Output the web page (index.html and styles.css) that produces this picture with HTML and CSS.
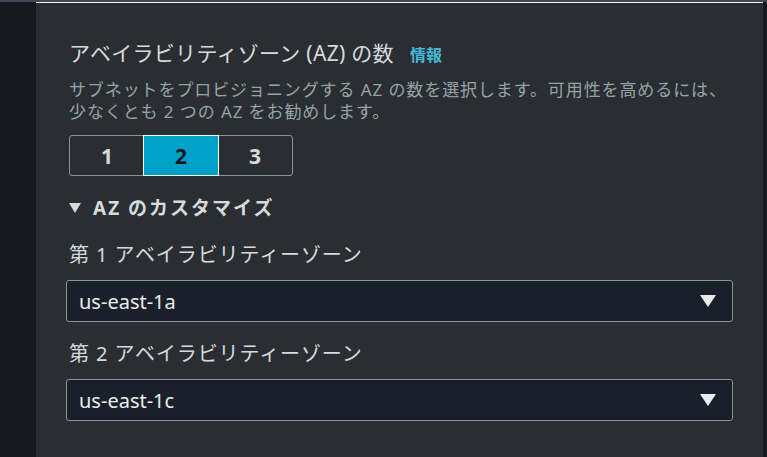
FILE: index.html
```html
<!DOCTYPE html>
<html lang="ja">
<head>
<meta charset="utf-8">
<link rel="stylesheet" href="styles.css">
</head>
<body>
<div class="topbar"></div>
<div class="main">
  <div class="side"></div>
  <div class="panel">
    <div class="heading">
      <span class="title">アベイラビリティゾーン (AZ) の数</span>
      <span class="info">情報</span>
    </div>
    <p class="desc">サブネットをプロビジョニングする AZ の数を選択します。可用性を高めるには、<br>少なくとも 2 つの AZ をお勧めします。</p>
    <div class="segments">
      <div class="seg">1</div>
      <div class="seg selected">2</div>
      <div class="seg">3</div>
    </div>
    <div class="expander">
      <svg class="caret" width="12" height="10" viewBox="0 0 12 10"><path d="M0 0 H12 L6 10 Z" fill="#d5dbdb"/></svg>
      <span>AZ のカスタマイズ</span>
    </div>
    <div class="field">
      <div class="label">第 1 アベイラビリティーゾーン</div>
      <div class="select">
        <span>us-east-1a</span>
        <svg class="arrow" width="16" height="12" viewBox="0 0 16 12"><path d="M0 0 H16 L8 12 Z" fill="#eaeded"/></svg>
      </div>
    </div>
    <div class="field">
      <div class="label">第 2 アベイラビリティーゾーン</div>
      <div class="select">
        <span>us-east-1c</span>
        <svg class="arrow" width="16" height="12" viewBox="0 0 16 12"><path d="M0 0 H16 L8 12 Z" fill="#eaeded"/></svg>
      </div>
    </div>
  </div>
  <div class="rside"></div>
</div>
</body>
</html>
```
FILE: styles.css
```css
html, body {
  margin: 0;
  padding: 0;
  background: #16191f;
  height: 100%;
  overflow: hidden;
  font-family: "Noto Sans", "Noto Sans CJK JP", sans-serif;
}
.topbar {
  height: 2px;
  background: #414855;
}
.main {
  display: flex;
  height: calc(100% - 2px);
}
.side {
  width: 36px;
  flex: none;
  background: #16191f;
}
.rside {
  width: 4px;
  flex: none;
  background: #16191f;
}
.panel {
  flex: 1;
  background: #2a2e33;
  border-top: 1px solid #f2f3f3;
  padding: 35px 30px 0 30px;
}
.heading {
  display: flex;
  align-items: baseline;
  margin-left: 3px;
  line-height: 30px;
}
.title {
  font-size: 21px;
  letter-spacing: 0.3px;
  color: #d5dbdb;
}
.info {
  font-size: 16px;
  font-weight: 700;
  color: #44b9d6;
  margin-left: 16px;
}
.desc {
  margin: 9px 0 0 3px;
  font-size: 17px;
  letter-spacing: 0.9px;
  line-height: 22px;
  color: #95a5a6;
}
.segments {
  display: flex;
  margin: 12px 0 0 3px;
  width: 224px;
  height: 41px;
  border: 1px solid #879596;
  border-radius: 3px;
  box-sizing: border-box;
}
.seg {
  flex: 1;
  display: flex;
  align-items: center;
  justify-content: center;
  font-size: 21px;
  font-weight: 700;
  color: #d5dbdb;
}
.seg.selected {
  background: #00a1c9;
  color: #16191f;
  outline: 1px solid #ffffff;
}
.expander {
  display: flex;
  align-items: center;
  margin: 19px 0 0 3px;
  font-size: 19px;
  letter-spacing: 2px;
  font-weight: 700;
  color: #d5dbdb;
  line-height: 26px;
}
.caret {
  margin-right: 12px;
}
.field {
  margin-top: 21px;
}
.field + .field {
  margin-top: 19px;
}
.label {
  margin-left: 3px;
  font-size: 20px;
  letter-spacing: 0.9px;
  line-height: 26px;
  color: #d5dbdb;
}
.select {
  margin-top: 12px;
  height: 42px;
  box-sizing: border-box;
  border: 1px solid #879596;
  border-radius: 3px;
  background: #1a2029;
  display: flex;
  align-items: center;
  justify-content: space-between;
  padding: 0 16px 0 12px;
  font-size: 20px;
  color: #eaeded;
}
```
